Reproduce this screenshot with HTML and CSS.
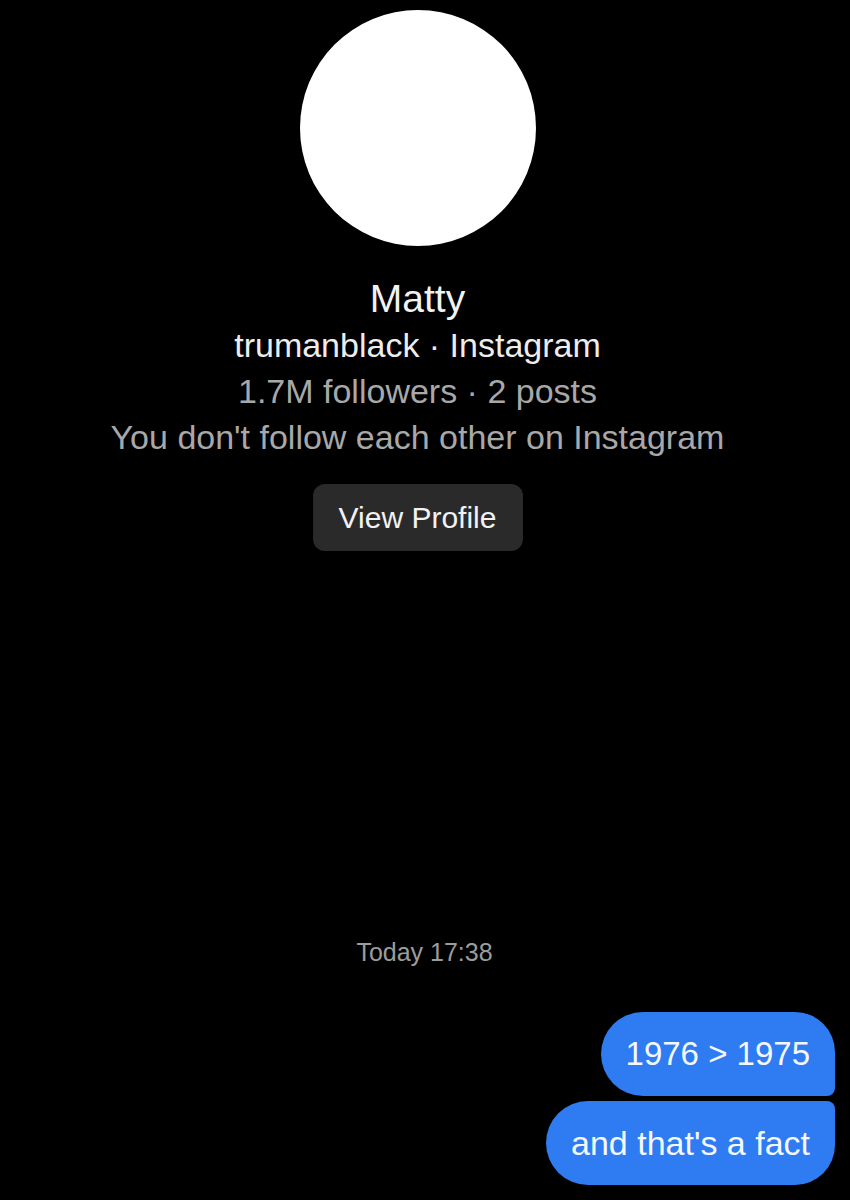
FILE: index.html
```html
<!DOCTYPE html>
<html lang="en">
<head>
    <meta charset="UTF-8">
    <meta name="viewport" content="width=device-width, initial-scale=1.0">
    <title>Matty</title>
    <link rel="stylesheet" href="styles.css">
</head>
<body>

    <div class="profile">
        <div class="avatar"></div>
        <h1 class="name">Matty</h1>
        <p class="handle">trumanblack · Instagram</p>
        <p class="meta">1.7M followers · 2 posts</p>
        <p class="meta">You don't follow each other on Instagram</p>
        <button class="view-btn">View Profile</button>
    </div>

    <div class="chat">
        <div class="timestamp">Today 17:38</div>
        <div class="bubble first">1976 &gt; 1975</div>
        <div class="bubble last">and that's a fact</div>
    </div>

</body>
</html>
```

FILE: styles.css
```css
body {
    margin: 0;
    background: #000;
    font-family: 'Liberation Sans', Arial, sans-serif;
    height: 1200px;
    display: flex;
    flex-direction: column;
    justify-content: space-between;
    overflow: hidden;
}
.profile {
    display: flex;
    flex-direction: column;
    align-items: center;
    padding: 10px 15px 0 0;
}
.avatar {
    width: 236px;
    height: 236px;
    border-radius: 50%;
    background: #fff;
    margin-bottom: 30px;
}
.name {
    margin: 0;
    font-size: 39px;
    font-weight: normal;
    color: #f2f2f2;
    line-height: 46px;
}
.handle, .meta {
    margin: 0;
    font-size: 34px;
    line-height: 46px;
}
.handle {
    color: #ededed;
}
.meta {
    color: #a8a8a8;
}
.view-btn {
    margin-top: 24px;
    width: 210px;
    height: 67px;
    border: none;
    border-radius: 12px;
    background: #2a2a2a;
    color: #f2f2f2;
    font-family: 'Liberation Sans', Arial, sans-serif;
    font-size: 30px;
    padding: 0;
}
.chat {
    display: flex;
    flex-direction: column;
    align-items: flex-end;
    padding: 0 15px 15px 0;
    gap: 5px;
}
.timestamp {
    align-self: center;
    color: #9c9c9c;
    font-size: 25px;
    margin: 0 0 40px 14px;
}
.bubble {
    background: #2f7bf2;
    color: #f4f8ff;
    font-size: 33px;
    height: 84px;
    line-height: 84px;
    padding: 0 25px;
}
.first {
    border-radius: 42px 40px 8px 42px;
}
.last {
    font-size: 34px;
    border-radius: 42px 8px 40px 42px;
}
```
